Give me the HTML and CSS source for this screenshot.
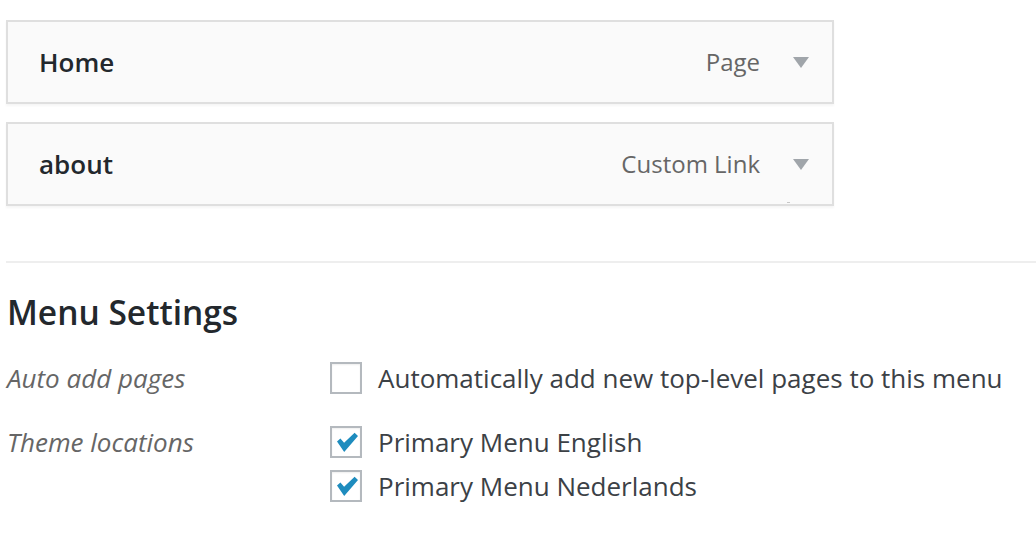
FILE: index.html
```html
<!DOCTYPE html>
<html>
<head>
<meta charset="utf-8">
<link rel="stylesheet" href="styles.css">
</head>
<body>
<div class="page">
  <ul class="menu-items">
    <li class="item">
      <span class="item-title">Home</span>
      <span class="item-controls"><span class="item-type">Page</span><span class="arrow"></span></span>
    </li>
    <li class="item">
      <span class="item-title">about</span>
      <span class="item-controls"><span class="item-type">Custom Link</span><span class="arrow"></span></span>
      <span class="speck"></span>
    </li>
  </ul>
  <hr class="sep">
  <h3 class="heading">Menu Settings</h3>
  <div class="settings">
    <div class="row">
      <div class="label">Auto add pages</div>
      <div class="options">
        <label class="option"><span class="cb"></span><span class="opt-text">Automatically add new top-level pages to this menu</span></label>
      </div>
    </div>
    <div class="row">
      <div class="label">Theme locations</div>
      <div class="options">
        <label class="option"><span class="cb checked"><svg viewBox="0 0 28 28" class="tick"><path d="M5 13.6 L8.4 10.5 L12.1 14.8 L22.6 4.8 L26 8.1 L12.2 24 Z"/></svg></span><span class="opt-text">Primary Menu English</span></label>
        <label class="option"><span class="cb checked"><svg viewBox="0 0 28 28" class="tick"><path d="M5 13.6 L8.4 10.5 L12.1 14.8 L22.6 4.8 L26 8.1 L12.2 24 Z"/></svg></span><span class="opt-text">Primary Menu Nederlands</span></label>
      </div>
    </div>
  </div>
</div>
</body>
</html>
```

FILE: styles.css
```css
html, body {
  margin: 0;
  padding: 0;
  background: #ffffff;
}
body {
  font-family: "Open Sans", "Noto Sans", sans-serif;
  color: #444444;
  overflow: hidden;
}
.page {
  padding: 20px 0 0 6px;
}
.menu-items {
  list-style: none;
  margin: 0;
  padding: 0;
  display: flex;
  flex-direction: column;
  gap: 18px;
}
.item {
  position: relative;
  box-sizing: content-box;
  width: 770px;
  height: 80px;
  border: 2px solid #dfdfdf;
  background: #fafafa;
  box-shadow: 0 2px 2px rgba(0, 0, 0, 0.04);
  display: flex;
  align-items: center;
  justify-content: space-between;
  padding: 0 23px 0 31px;
}
.item-title {
  font-size: 26px;
  font-weight: 600;
  color: #23282d;
  line-height: 80px;
}
.item-controls {
  display: flex;
  align-items: center;
  gap: 33px;
}
.item-type {
  font-size: 24px;
  color: #666666;
  line-height: 80px;
}
.arrow {
  width: 0;
  height: 0;
  border-left: 8px solid transparent;
  border-right: 8px solid transparent;
  border-top: 11px solid #a0a5aa;
}
.speck {
  position: absolute;
  left: 779px;
  bottom: 1px;
  width: 3px;
  height: 1px;
  background: #c8c8c8;
}
.sep {
  border: 0;
  height: 2px;
  background: #eeeeee;
  margin: 55px 0 0 0;
}
.heading {
  margin: 28px 0 0 1px;
  font-size: 33.5px;
  line-height: 42px;
  font-weight: 600;
  color: #23282d;
}
.settings {
  margin-top: 29px;
  display: flex;
  flex-direction: column;
  gap: 32px;
}
.row {
  display: grid;
  grid-template-columns: 324px 1fr;
}
.label {
  font-style: italic;
  font-size: 26px;
  line-height: 32px;
  color: #666666;
  padding-left: 1px;
}
.options {
  display: flex;
  flex-direction: column;
  gap: 12px;
}
.option {
  display: flex;
  align-items: center;
  gap: 16px;
}
.cb {
  width: 28px;
  height: 28px;
  border: 2px solid #b4b9be;
  background: #ffffff;
  box-shadow: inset 0 1px 2px rgba(0, 0, 0, 0.07);
  display: flex;
  flex: none;
}
.tick {
  width: 28px;
  height: 28px;
  fill: #1e8cbe;
}
.opt-text {
  font-size: 26px;
  line-height: 32px;
  color: #3c4146;
}
```
